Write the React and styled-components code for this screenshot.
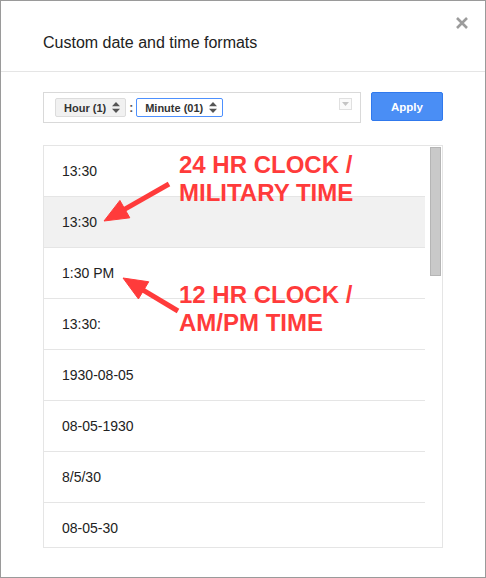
import React from "react";
import styled, { createGlobalStyle } from "styled-components";

const Global = createGlobalStyle`
  html, body {
    margin: 0;
    padding: 0;
    background: #fff;
  }
  * {
    box-sizing: border-box;
  }
`;

const Dialog = styled.div`
  position: relative;
  width: 486px;
  height: 578px;
  border: 1px solid #9a9a9a;
  background: #fff;
  font-family: Arial, "Liberation Sans", sans-serif;
  color: #222;
  overflow: hidden;
`;

const Header = styled.header`
  height: 71px;
  padding: 33px 0 0 42px;
  border-bottom: 1px solid #e5e5e5;
`;

const Title = styled.h1`
  margin: 0;
  font-size: 16px;
  font-weight: normal;
  color: #222;
`;

const Close = styled.button`
  position: absolute;
  top: 15px;
  right: 16px;
  width: 14px;
  height: 14px;
  padding: 0;
  border: 0;
  background: none;
  cursor: pointer;
`;

const Body = styled.div`
  padding: 20px 42px 0 42px;
`;

const Toolbar = styled.div`
  display: flex;
  align-items: flex-start;
  gap: 10px;
`;

const TokenBox = styled.div`
  position: relative;
  display: flex;
  align-items: center;
  width: 318px;
  height: 31px;
  padding: 0 0 0 11px;
  border: 1px solid #d9d9d9;
  gap: 2px;
`;

const Chip = styled.div`
  display: flex;
  flex: none;
  align-items: center;
  gap: 6px;
  height: 19px;
  padding: 0 5px 0 8px;
  font-size: 11px;
  font-weight: bold;
  white-space: nowrap;
  color: #333;
  background: ${(p) => (p.active ? "#fff" : "#f1f1f1")};
  border: 1px solid ${(p) => (p.active ? "#4d90fe" : "#dcdcdc")};
  border-radius: 2px;

  svg {
    flex: none;
  }
`;

const Sep = styled.span`
  padding: 0 1px;
  font-size: 12px;
  font-weight: bold;
  color: #555;
`;

const DropToggle = styled.div`
  position: absolute;
  top: 5px;
  right: 8px;
  width: 13px;
  height: 12px;
  border: 1px solid #e0e0e0;
  background: #fafafa;
  display: flex;
  align-items: center;
  justify-content: center;
`;

const ApplyButton = styled.button`
  width: 72px;
  height: 29px;
  border: 1px solid #3079ed;
  border-radius: 2px;
  background: #4a8ef5;
  color: #fff;
  font-family: Arial, "Liberation Sans", sans-serif;
  font-size: 11.5px;
  font-weight: bold;
  cursor: pointer;
`;

const List = styled.div`
  display: flex;
  margin-top: 22px;
  height: 403px;
  border: 1px solid #e5e5e5;
  overflow: hidden;
`;

const Rows = styled.ul`
  flex: 1;
  margin: 0;
  padding: 0;
  list-style: none;
`;

const Row = styled.li`
  display: flex;
  align-items: center;
  height: 51px;
  padding: 0 0 0 18px;
  font-size: 14px;
  color: #222;
  background: ${(p) => (p.selected ? "#f1f1f1" : "#fff")};
  border-bottom: 1px solid #e5e5e5;
`;

const Track = styled.div`
  width: 17px;
  padding: 1px 1px 0 5px;
`;

const Thumb = styled.div`
  height: 129px;
  background: #c9c9c9;
  border: 1px solid #b5b5b5;
`;

const Note = styled.div`
  position: absolute;
  left: ${(p) => p.x}px;
  top: ${(p) => p.y}px;
  font-size: 24px;
  line-height: 28px;
  font-weight: bold;
  color: #ff3b3b;
  white-space: nowrap;
  pointer-events: none;
`;

const Arrows = styled.svg`
  position: absolute;
  left: 0;
  top: 0;
  pointer-events: none;
`;

const Stepper = () => (
  <svg width="8" height="11" viewBox="0 0 8 11">
    <path d="M4 0 L8 4.2 L0 4.2 Z" fill="#555" />
    <path d="M4 11 L8 6.8 L0 6.8 Z" fill="#555" />
  </svg>
);

const formats = [
  "13:30",
  "13:30",
  "1:30 PM",
  "13:30:",
  "1930-08-05",
  "08-05-1930",
  "8/5/30",
  "08-05-30",
];

const Arrow = ({ x1, y1, x2, y2 }) => {
  const dx = x2 - x1;
  const dy = y2 - y1;
  const len = Math.hypot(dx, dy);
  const ux = dx / len;
  const uy = dy / len;
  const head = 24;
  const half = 10;
  const bx = x2 - ux * head;
  const by = y2 - uy * head;
  const pts = [
    `${x2},${y2}`,
    `${bx - uy * half},${by + ux * half}`,
    `${bx + uy * half},${by - ux * half}`,
  ].join(" ");
  return (
    <g fill="#ff3b3b" stroke="#ff3b3b">
      <line x1={x1} y1={y1} x2={bx + ux * 2} y2={by + uy * 2} strokeWidth="5" />
      <polygon points={pts} strokeWidth="1" strokeLinejoin="round" />
    </g>
  );
};

export default function App() {
  return (
    <>
      <Global />
      <Dialog>
        <Header>
          <Title>Custom date and time formats</Title>
        </Header>
        <Close aria-label="Close">
          <svg width="14" height="14" viewBox="0 0 14 14">
            <path d="M2 2 L12 12 M12 2 L2 12" stroke="#9c9c9c" strokeWidth="2.6" />
          </svg>
        </Close>
        <Body>
          <Toolbar>
            <TokenBox>
              <Chip>
                Hour (1)
                <Stepper />
              </Chip>
              <Sep>:</Sep>
              <Chip active>
                Minute (01)
                <Stepper />
              </Chip>
              <DropToggle>
                <svg width="7" height="4" viewBox="0 0 7 4">
                  <path d="M0 0 L7 0 L3.5 4 Z" fill="#c4c4c4" />
                </svg>
              </DropToggle>
            </TokenBox>
            <ApplyButton>Apply</ApplyButton>
          </Toolbar>
          <List>
            <Rows>
              {formats.map((f, i) => (
                <Row key={i} selected={i === 1}>
                  {f}
                </Row>
              ))}
            </Rows>
            <Track>
              <Thumb />
            </Track>
          </List>
        </Body>

        <Note x={178} y={150}>
          24 HR CLOCK /
          <br />
          MILITARY TIME
        </Note>
        <Note x={178} y={280}>
          12 HR CLOCK /
          <br />
          AM/PM TIME
        </Note>
        <Arrows width="486" height="578" viewBox="0 0 486 578">
          <Arrow x1={168} y1={183} x2={103} y2={220} />
          <Arrow x1={177} y1={310} x2={122} y2={277} />
        </Arrows>
      </Dialog>
    </>
  );
}
